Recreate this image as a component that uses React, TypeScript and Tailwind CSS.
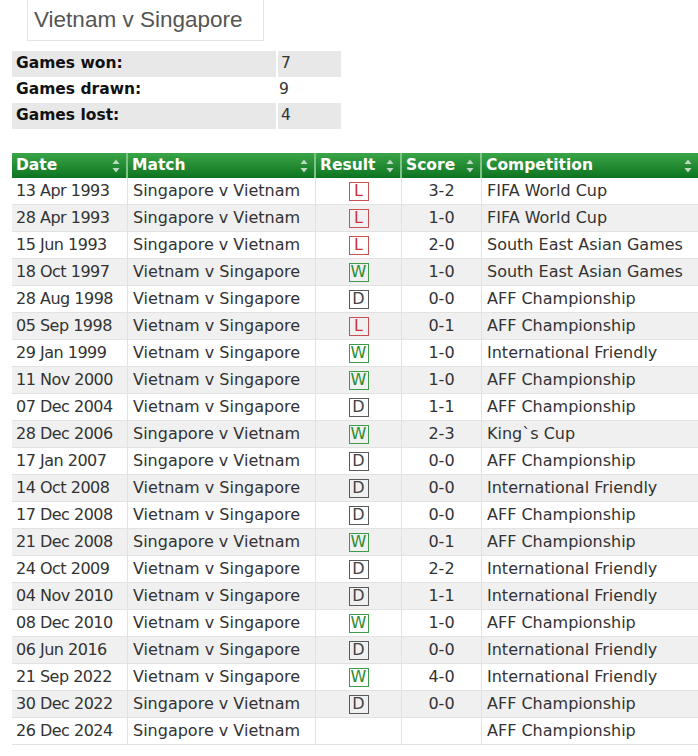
import React from "react";

type Result = "W" | "D" | "L" | "";

const matches: [string, string, Result, string, string][] = [
  ["13 Apr 1993", "Singapore v Vietnam", "L", "3-2", "FIFA World Cup"],
  ["28 Apr 1993", "Singapore v Vietnam", "L", "1-0", "FIFA World Cup"],
  ["15 Jun 1993", "Singapore v Vietnam", "L", "2-0", "South East Asian Games"],
  ["18 Oct 1997", "Vietnam v Singapore", "W", "1-0", "South East Asian Games"],
  ["28 Aug 1998", "Vietnam v Singapore", "D", "0-0", "AFF Championship"],
  ["05 Sep 1998", "Vietnam v Singapore", "L", "0-1", "AFF Championship"],
  ["29 Jan 1999", "Vietnam v Singapore", "W", "1-0", "International Friendly"],
  ["11 Nov 2000", "Vietnam v Singapore", "W", "1-0", "AFF Championship"],
  ["07 Dec 2004", "Vietnam v Singapore", "D", "1-1", "AFF Championship"],
  ["28 Dec 2006", "Singapore v Vietnam", "W", "2-3", "King`s Cup"],
  ["17 Jan 2007", "Singapore v Vietnam", "D", "0-0", "AFF Championship"],
  ["14 Oct 2008", "Vietnam v Singapore", "D", "0-0", "International Friendly"],
  ["17 Dec 2008", "Vietnam v Singapore", "D", "0-0", "AFF Championship"],
  ["21 Dec 2008", "Singapore v Vietnam", "W", "0-1", "AFF Championship"],
  ["24 Oct 2009", "Vietnam v Singapore", "D", "2-2", "International Friendly"],
  ["04 Nov 2010", "Vietnam v Singapore", "D", "1-1", "International Friendly"],
  ["08 Dec 2010", "Vietnam v Singapore", "W", "1-0", "AFF Championship"],
  ["06 Jun 2016", "Vietnam v Singapore", "D", "0-0", "International Friendly"],
  ["21 Sep 2022", "Vietnam v Singapore", "W", "4-0", "International Friendly"],
  ["30 Dec 2022", "Singapore v Vietnam", "D", "0-0", "AFF Championship"],
  ["26 Dec 2024", "Singapore v Vietnam", "", "", "AFF Championship"],
];

const stats = [
  { label: "Games won:", value: "7" },
  { label: "Games drawn:", value: "9" },
  { label: "Games lost:", value: "4" },
];

const SortIcon = () => (
  <svg width="8" height="14" viewBox="0 0 8 14" className="shrink-0">
    <path d="M4 0.5 L7.5 5 L0.5 5 Z" fill="#bfd9c2" />
    <path d="M4 13.5 L7.5 9 L0.5 9 Z" fill="#bfd9c2" />
  </svg>
);

const Badge = ({ r }: { r: Result }) => {
  if (!r) return null;
  const tone =
    r === "W"
      ? "border-[#3d9a4a] text-[#2b8c2f]"
      : r === "L"
      ? "border-[#c95050] text-[#cc3333]"
      : "border-[#5a5a5a] text-[#444]";
  return (
    <span
      className={`inline-flex w-[20px] h-[19px] items-center justify-center border text-[16px] leading-none ${tone}`}
    >
      {r}
    </span>
  );
};

const cols = "grid grid-cols-[116px_188px_86px_80px_216px]";

export default function App() {
  return (
    <div className="bg-white min-h-[756px] w-[698px] overflow-hidden font-['DejaVu_Sans',Verdana,sans-serif]">
      {/* Title */}
      <div className="ml-[27px] w-[237px] h-[41px] border-x border-b border-[#e4e4e4] pl-[6px] flex items-center">
        <span className="font-['Liberation_Sans',Arial,sans-serif] text-[22.5px] text-[#555]">
          Vietnam v Singapore
        </span>
      </div>

      {/* Summary */}
      <div className="mt-[10px] ml-[12px] w-[329px]">
        {stats.map((s, i) => (
          <div
            key={s.label}
            className={`grid grid-cols-[262px_65px] gap-x-[2px] h-[26px] ${
              i === 1 ? "" : "bg-[#e8e8e8]"
            }`}
          >
            <div
              className={`flex items-center pl-[4px] font-bold text-[15.5px] text-[#111] ${
                i === 1 ? "" : "bg-[#e8e8e8]"
              }`}
            >
              {s.label}
            </div>
            <div
              className={`flex items-center pl-[3px] text-[15.5px] text-[#333] ${
                i === 1 ? "bg-white" : "bg-[#e8e8e8] border-l-2 border-white"
              }`}
            >
              {s.value}
            </div>
          </div>
        ))}
      </div>

      {/* Head-to-head table */}
      <div className="mt-[24px] ml-[12px] w-[686px]">
        <div
          className={`${cols} h-[25px] bg-gradient-to-b from-[#3aa548] to-[#0a7421] text-white font-bold text-[15.5px]`}
        >
          {["Date", "Match", "Result", "Score", "Competition"].map((h, i) => (
            <div
              key={h}
              className={`flex items-center justify-between pl-[4px] pr-[6px] ${
                i < 4 ? "border-r-2 border-[#7cc386]" : ""
              }`}
            >
              <span>{h}</span>
              <SortIcon />
            </div>
          ))}
        </div>

        {matches.map(([date, match, result, score, comp], i) => (
          <div
            key={date}
            className={`${cols} h-[27px] border-b border-[#e2e2e2] text-[16px] text-[#333] ${
              i % 2 === 1 ? "bg-[#f0f0f0]" : "bg-white"
            }`}
          >
            <div className="flex items-center pl-[4px] border-r border-[#e2e2e2] tracking-[-0.5px] whitespace-nowrap">
              {date}
            </div>
            <div className="flex items-center pl-[5px] border-r border-[#e2e2e2] whitespace-nowrap">
              {match}
            </div>
            <div className="flex items-center justify-center border-r border-[#e2e2e2]">
              <Badge r={result} />
            </div>
            <div className="flex items-center justify-center border-r border-[#e2e2e2]">
              {score}
            </div>
            <div className="flex items-center pl-[5px] whitespace-nowrap">{comp}</div>
          </div>
        ))}
      </div>
    </div>
  );
}
